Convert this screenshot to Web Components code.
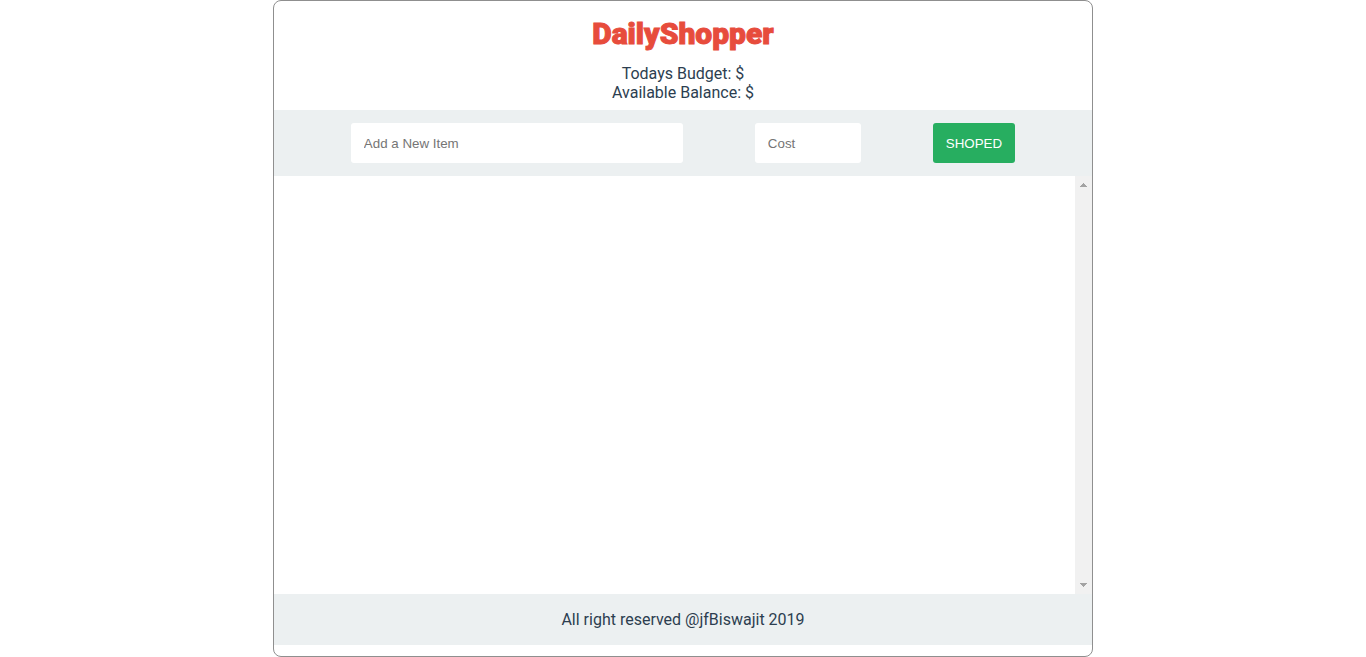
<!DOCTYPE html>
<html lang="en">
<head>
<meta charset="utf-8">
<meta name="viewport" content="width=device-width, initial-scale=1">
<title>DailyShopper</title>
<style>
  body { margin: 0; background: #fff; color: #2c3e50; font: 16px/19px Roboto, sans-serif; }
</style>
</head>
<body>
<shop-app>
  <shop-header slot="header" name="DailyShopper">
    <div>Todays Budget: $</div>
    <div>Available Balance: $</div>
  </shop-header>
  <shop-form slot="form"></shop-form>
  <shop-list></shop-list>
  <shop-footer slot="footer">All right reserved @jfBiswajit 2019</shop-footer>
</shop-app>
<script>
  const define = (name, html, setup) => {
    const template = document.createElement('template');
    template.innerHTML = html;
    customElements.define(name, class extends HTMLElement {
      constructor() {
        super();
        this.attachShadow({ mode: 'open' }).append(template.content.cloneNode(true));
      }
      connectedCallback() { if (setup) setup(this, this.shadowRoot); }
    });
  };

  define('shop-app', `
    <style>
      :host { display: flex; flex-direction: column; box-sizing: border-box; width: 60%; min-height: 100vh;
        margin: 0 auto; padding-bottom: 11px; border: 1px solid #8f8f8f; border-radius: 8px; }
      main { flex: 1; display: flex; }
    </style>
    <slot name="header"></slot>
    <slot name="form"></slot>
    <main><slot></slot></main>
    <slot name="footer"></slot>`);

  define('shop-header', `
    <style>
      :host { display: block; padding: 15px 0 8px; text-align: center; }
      h1 { margin: 0 0 12px; color: #e74c3c; font-size: 30px; line-height: 36px; font-weight: 900;
        -webkit-text-stroke: 1px #e74c3c; }
    </style>
    <header><h1></h1><slot></slot></header>`,
    (host, root) => { root.querySelector('h1').textContent = host.getAttribute('name'); });

  define('shop-form', `
    <style>
      :host { display: block; background: #ecf0f1; }
      form { display: flex; justify-content: center; gap: 72px; padding: 13px; }
      input, button { box-sizing: border-box; height: 40px; padding: 0 13px; border: 0; border-radius: 3px;
        font-family: "Liberation Sans", Arial, sans-serif; }
      input { background: #fff; min-width: 0; }
      input::placeholder { color: #757575; }
      .item { flex: 0 1 332px; }
      .cost { flex: 0 1 106px; }
      button { background: #27ae60; color: #fff; cursor: pointer; }
    </style>
    <form>
      <input class="item" type="text" placeholder="Add a New Item" aria-label="Add a New Item">
      <input class="cost" type="text" inputmode="decimal" placeholder="Cost" aria-label="Cost">
      <button type="submit">SHOPED</button>
    </form>`,
    (host, root) => root.querySelector('form').addEventListener('submit', e => e.preventDefault()));

  define('shop-list', `
    <style>
      :host { flex: 1; display: flex; justify-content: space-between; }
      ul { flex: 1; margin: 0; padding: 0; list-style: none; }
      .track { display: flex; flex-direction: column; justify-content: space-between; width: 17px; background: #f1f1f1; }
      svg { display: block; fill: #a3a3a3; }
    </style>
    <ul></ul>
    <div class="track" aria-hidden="true">
      <svg width="17" height="17" shape-rendering="crispEdges"><path d="M8 7h1v1h1v1h1v1h1v1H5v-1h1V9h1V8h1z"/></svg>
      <svg width="17" height="17" shape-rendering="crispEdges"><path d="M5 6h7v1h-1v1h-1v1H9v1H8V9H7V8H6V7H5z"/></svg>
    </div>`);

  define('shop-footer', `
    <style>
      :host { display: block; padding: 16px 0; background: #ecf0f1; text-align: center; }
    </style>
    <footer><slot></slot></footer>`);
</script>
</body>
</html>
